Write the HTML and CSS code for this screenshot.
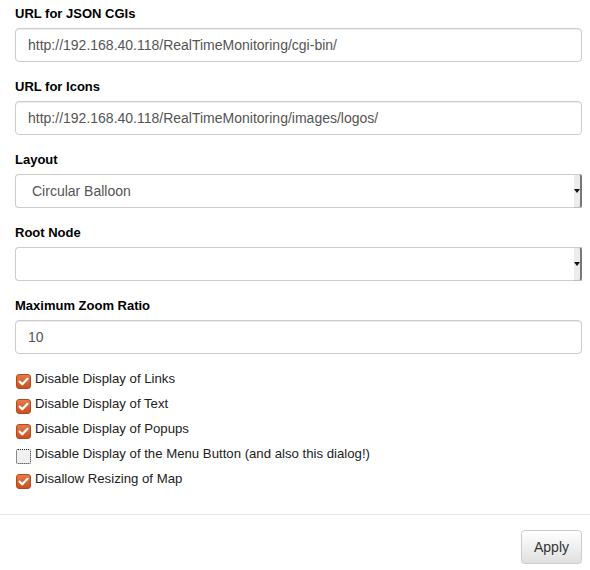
FILE: index.html
```
<!DOCTYPE html>
<html>
<head>
<meta charset="utf-8">
<link rel="stylesheet" href="styles.css">
</head>
<body>
<div class="form">
  <div class="group">
    <label class="lbl">URL for JSON CGIs</label>
    <div class="input">http://192.168.40.118/RealTimeMonitoring/cgi-bin/</div>
  </div>
  <div class="group">
    <label class="lbl">URL for Icons</label>
    <div class="input">http://192.168.40.118/RealTimeMonitoring/images/logos/</div>
  </div>
  <div class="group">
    <label class="lbl">Layout</label>
    <div class="select"><span class="sel-text">Circular Balloon</span><span class="sel-arrow"></span></div>
  </div>
  <div class="group">
    <label class="lbl">Root Node</label>
    <div class="select"><span class="sel-text"></span><span class="sel-arrow"></span></div>
  </div>
  <div class="group">
    <label class="lbl">Maximum Zoom Ratio</label>
    <div class="input">10</div>
  </div>
  <div class="checks">
    <div class="check"><span class="box on"><svg viewBox="0 0 15 15" width="15" height="15"><path d="M3.6 7.6 L6.3 10.3 L11.5 4.8" fill="none" stroke="#fff" stroke-width="2.2" stroke-linecap="round" stroke-linejoin="round"/></svg></span><span>Disable Display of Links</span></div>
    <div class="check"><span class="box on"><svg viewBox="0 0 15 15" width="15" height="15"><path d="M3.6 7.6 L6.3 10.3 L11.5 4.8" fill="none" stroke="#fff" stroke-width="2.2" stroke-linecap="round" stroke-linejoin="round"/></svg></span><span>Disable Display of Text</span></div>
    <div class="check"><span class="box on"><svg viewBox="0 0 15 15" width="15" height="15"><path d="M3.6 7.6 L6.3 10.3 L11.5 4.8" fill="none" stroke="#fff" stroke-width="2.2" stroke-linecap="round" stroke-linejoin="round"/></svg></span><span>Disable Display of Popups</span></div>
    <div class="check"><span class="box off"></span><span>Disable Display of the Menu Button (and also this dialog!)</span></div>
    <div class="check"><span class="box on"><svg viewBox="0 0 15 15" width="15" height="15"><path d="M3.6 7.6 L6.3 10.3 L11.5 4.8" fill="none" stroke="#fff" stroke-width="2.2" stroke-linecap="round" stroke-linejoin="round"/></svg></span><span>Disallow Resizing of Map</span></div>
  </div>
</div>
<div class="footer">
  <button class="btn">Apply</button>
</div>
</body>
</html>
```
FILE: styles.css
```
html, body {
  margin: 0;
  padding: 0;
  background: #fff;
}
body {
  font-family: "Liberation Sans", Arial, sans-serif;
  font-size: 13px;
  line-height: 1.42857;
  color: #333;
  width: 590px;
}
.form {
  padding: 4px 8px 0 15px;
}
.group {
  margin-bottom: 15px;
}
.lbl {
  display: block;
  font-weight: bold;
  font-size: 13px;
  line-height: 19px;
  color: #000;
  margin-bottom: 5px;
}
.input {
  box-sizing: border-box;
  height: 34px;
  border: 1px solid #ccc;
  border-radius: 4px;
  padding: 6px 12px;
  font-size: 14px;
  line-height: 20px;
  color: #555;
  box-shadow: inset 0 1px 1px rgba(0,0,0,0.075);
}
.select {
  box-sizing: border-box;
  height: 34px;
  border: 1px solid #ccc;
  border-right: none;
  border-radius: 4px 0 0 4px;
  display: flex;
  align-items: stretch;
  font-size: 14px;
  line-height: 20px;
  color: #555;
}
.sel-text {
  flex: 1;
  padding: 6px 16px;
}
.sel-arrow {
  width: 6px;
  margin-top: -1px;
  margin-bottom: -1px;
  background: #ececec;
  border-top: 1px solid #ccc;
  border-bottom: 1px solid #bbb;
  border-right: 2px solid #777;
  border-radius: 0 3px 3px 0;
  position: relative;
}
.sel-arrow::after {
  content: "";
  position: absolute;
  left: 0;
  top: 14px;
  border-left: 3px solid transparent;
  border-right: 3px solid transparent;
  border-top: 4px solid #111;
}
.checks {
  margin-top: -2px;
}
.check {
  display: flex;
  align-items: center;
  height: 25px;
  font-size: 13.2px;
  color: #222;
  padding-left: 1px;
}
.box {
  box-sizing: border-box;
  width: 15px;
  height: 15px;
  margin-right: 4px;
  margin-top: 3px;
  flex: none;
  display: block;
}
.box svg {
  display: block;
}
.box.on {
  border-radius: 3px;
  background: linear-gradient(#e57a4c, #c9501f);
  border: 1px solid #b24a1e;
}
.box.on svg {
  margin: -1px;
}
.box.off {
  border: 1px dotted #222;
  background: #f0f0f0;
  border-radius: 2px;
}
.footer {
  margin-top: 22px;
  border-top: 1px solid #e5e5e5;
  padding: 15px 8px 0 0;
  display: flex;
  justify-content: flex-end;
}
.btn {
  font-family: "Liberation Sans", Arial, sans-serif;
  font-size: 14px;
  line-height: 20px;
  color: #333;
  height: 34px;
  padding: 6px 12px;
  border: 1px solid #ccc;
  border-radius: 4px;
  background: linear-gradient(#fff, #e0e0e0);
  box-shadow: inset 0 1px 0 rgba(255,255,255,0.15), 0 1px 1px rgba(0,0,0,0.075);
}
```
